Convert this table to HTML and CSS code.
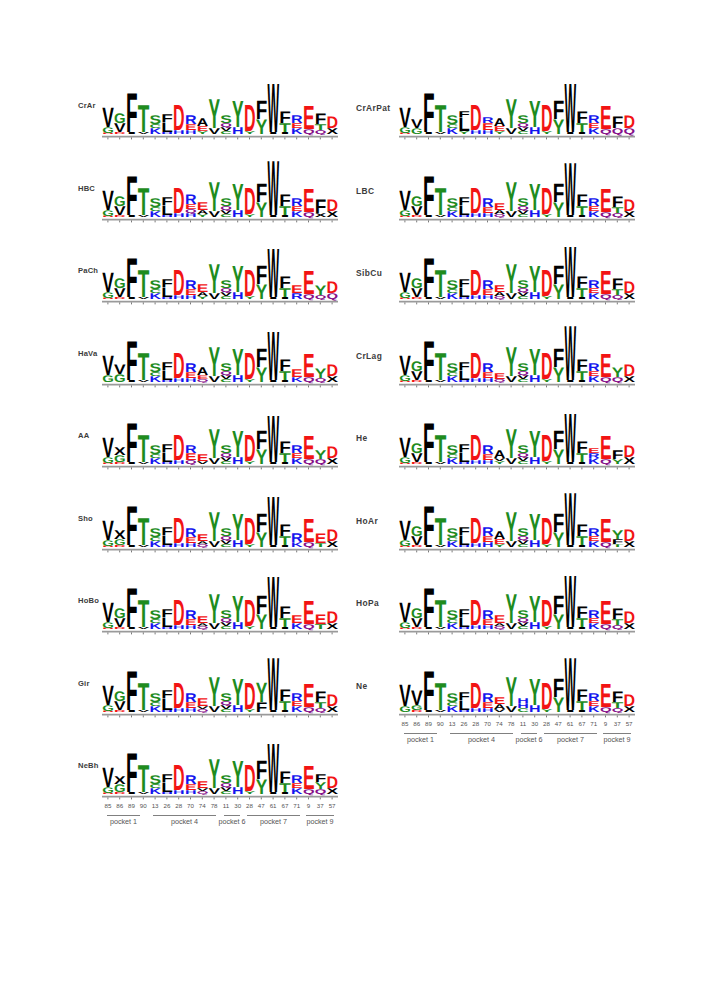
FILE: index.html
```html
<!DOCTYPE html>
<html lang="en">
<head>
<meta charset="utf-8">
<title>Sequence logos</title>
<link rel="stylesheet" href="styles.css">
</head>
<body>
<main class="figure">
  <div class="entry left"><span class="name">CrAr</span><svg class="logo" data-logo="CrAr"></svg></div>
  <div class="entry left"><span class="name">HBC</span><svg class="logo" data-logo="HBC"></svg></div>
  <div class="entry left"><span class="name">PaCh</span><svg class="logo" data-logo="PaCh"></svg></div>
  <div class="entry left"><span class="name">HaVa</span><svg class="logo" data-logo="HaVa"></svg></div>
  <div class="entry left"><span class="name">AA</span><svg class="logo" data-logo="AA"></svg></div>
  <div class="entry left"><span class="name">Sho</span><svg class="logo" data-logo="Sho"></svg></div>
  <div class="entry left"><span class="name">HoBo</span><svg class="logo" data-logo="HoBo"></svg></div>
  <div class="entry left"><span class="name">Gir</span><svg class="logo" data-logo="Gir"></svg></div>
  <div class="entry left"><span class="name">NeBh</span><svg class="logo pockets" data-logo="NeBh"></svg></div>
  <div class="entry right"><span class="name">CrArPat</span><svg class="logo" data-logo="CrArPat"></svg></div>
  <div class="entry right"><span class="name">LBC</span><svg class="logo" data-logo="LBC"></svg></div>
  <div class="entry right"><span class="name">SibCu</span><svg class="logo" data-logo="SibCu"></svg></div>
  <div class="entry right"><span class="name">CrLag</span><svg class="logo" data-logo="CrLag"></svg></div>
  <div class="entry right"><span class="name">He</span><svg class="logo" data-logo="He"></svg></div>
  <div class="entry right"><span class="name">HoAr</span><svg class="logo" data-logo="HoAr"></svg></div>
  <div class="entry right"><span class="name">HoPa</span><svg class="logo" data-logo="HoPa"></svg></div>
  <div class="entry right"><span class="name">Ne</span><svg class="logo pockets" data-logo="Ne"></svg></div>
</main>
<script src="script.js"></script>
</body>
</html>
```
FILE: styles.css
```css
html, body {
  margin: 0;
  padding: 0;
  background: #ffffff;
}
body {
  width: 709px;
  height: 994px;
  overflow: hidden;
  font-family: "Liberation Sans", Arial, sans-serif;
}
.figure {
  display: grid;
  grid-template-columns: 278px 290px;
  grid-template-rows: repeat(9, 82.5px);
  grid-auto-flow: column;
  padding: 69px 0 0 78px;
}
.entry {
  display: flex;
  align-items: flex-start;
}
.name {
  flex: none;
  font-weight: 700;
  color: #3c3c3c;
  line-height: 9px;
  white-space: nowrap;
}
.left .name {
  width: 24px;
  font-size: 7.6px;
  margin-top: 32px;
  letter-spacing: 0.2px;
}
.right .name {
  width: 43px;
  font-size: 8.4px;
  margin-top: 35px;
  letter-spacing: 0.4px;
}
.logo {
  flex: none;
  width: 240px;
  height: 82px;
  overflow: visible;
}
.logo.pockets {
  height: 100px;
}
.logo .aa {
  font-family: "Liberation Sans", Arial, sans-serif;
  font-weight: 700;
  text-rendering: geometricPrecision;
}
.logo .k { fill: #000000; }
.logo .g { fill: #1e8c1e; }
.logo .r { fill: #f21414; }
.logo .b { fill: #1414ee; }
.logo .p { fill: #86108a; }
.logo .axis { stroke: #9a9a9a; stroke-width: 1.6; }
.logo .tick { stroke: #7a7a7a; stroke-width: 1; }
.logo .num {
  font-family: "Liberation Sans", Arial, sans-serif;
  font-size: 6.2px;
  fill: #555555;
}
.logo .pk-line { stroke: #808080; stroke-width: 1; }
.logo .pk {
  font-family: "Liberation Sans", Arial, sans-serif;
  font-size: 7.2px;
  fill: #555555;
}
```
FILE: script.js
```js
(function () {
  var NS = 'http://www.w3.org/2000/svg';
  var COLW = 11.8;
  var BASE_Y = 65;
  var CAP = 71.6;

  var base = [
    'D1.5 G6 V20', 'D2 V9 G10', 'I2 F40', 'V2 T28',
    'K6 C4 S9', 'H2 L10 F8', 'H4 D26', 'H4 E6 R9', 'Y3 E5 A8', 'V6 Y30',
    'C3 V4 Q4 S8', 'H7 Y27',
    'Y3 D27', 'Y15 F19', 'I2 W50', 'I2 T9 F12', 'K6 E5 R8',
    'Q5 E24', 'Q4 T6 F11', 'X6 D12'
  ];

  var overrides = {
    CrAr: {},
    HBC: {7: 'H4 Q4 E5 R10', 8: 'Y3 A4 E8', 18: 'X4 F14', 14: 'I2 W56'},
    PaCh: {8: 'Y3 A4 E8', 16: 'R6 E8', 18: 'Q4 Y10', 19: 'Q6 D12'},
    HaVa: {0: 'G7 V20', 1: 'G8 V10', 8: 'Q3 E4 A8', 16: 'K5 E8', 18: 'Q4 Y10'},
    AA: {1: 'D2 G7 X8', 7: 'Q4 E7 R8', 8: 'V3 E7', 18: 'Q5 Y9', 14: 'I2 W48'},
    Sho: {1: 'D2 G6 X9', 8: 'Q3 A3 E7', 18: 'T4 E10', 16: 'K5 R9'},
    HoBo: {8: 'Q3 A3 E7', 16: 'K6 E8', 18: 'T5 E10', 14: 'I2 W52'},
    Gir: {13: 'F10 Y20', 14: 'I2 W54', 8: 'Q3 V3 E8', 5: 'H2 L12 F8'},
    NeBh: {1: 'D2 G8 X8', 8: 'Q3 V3 E7', 18: 'Q5 Y7 F8'},
    CrArPat: {1: 'G6 V9', 5: 'Y3 L14 F6', 7: 'H4 E7 R6', 18: 'Q6 F12', 19: 'Q6 D13'},
    LBC: {8: 'Q3 A4 E7', 14: 'I2 W54'},
    SibCu: {8: 'Q3 A4 E7', 14: 'I2 W52'},
    CrLag: {8: 'Q3 E6', 18: 'Q5 Y10', 14: 'I2 W56'},
    He: {8: 'Y3 V3 A8', 16: 'K6 R5 E5', 18: 'Y5 F9', 19: 'X7 D12'},
    HoAr: {7: 'H5 E6 R9', 18: 'T3 F5 Y9', 14: 'I2 W54'},
    HoPa: {8: 'Q3 A3 E8', 14: 'I2 W53'},
    Ne: {0: 'G6 V22', 1: 'D2 G5 V15', 8: 'V3 A5 E7', 10: 'C4 H5 H5', 14: 'I2 W54'}
  };

  var numbers = ['85','86','89','90','13','26','28','70','74','78','11','30','28','47','61','67','71','9','37','57'];
  var pockets = [
    {label: 'pocket 1', x1: 5, x2: 38},
    {label: 'pocket 4', x1: 51, x2: 114},
    {label: 'pocket 6', x1: 122, x2: 138},
    {label: 'pocket 7', x1: 145, x2: 198},
    {label: 'pocket 9', x1: 204, x2: 232}
  ];

  function colorClass(ch) {
    if ('GSTYC'.indexOf(ch) >= 0) return 'g';
    if ('NQ'.indexOf(ch) >= 0) return 'p';
    if ('KRH'.indexOf(ch) >= 0) return 'b';
    if ('DE'.indexOf(ch) >= 0) return 'r';
    return 'k';
  }

  function el(name, attrs, text) {
    var e = document.createElementNS(NS, name);
    for (var k in attrs) e.setAttribute(k, attrs[k]);
    if (text != null) e.textContent = text;
    return e;
  }

  function parse(s) {
    var out = [];
    var re = /([A-Z])([\d.]+)/g, m;
    while ((m = re.exec(s))) out.push([m[1], parseFloat(m[2])]);
    return out;
  }

  function draw(svg, name) {
    var ov = overrides[name] || {};
    var width = COLW * 20;
    svg.setAttribute('viewBox', '0 0 240 ' + (svg.classList.contains('pockets') ? 100 : 82));
    for (var i = 0; i < 20; i++) {
      var stack = parse(ov[i] != null ? ov[i] : base[i]);
      var x = i * COLW + 0.3;
      var yb = BASE_Y;
      stack.forEach(function (item) {
        var ch = item[0], h = item[1];
        var t = el('text', {
          'class': 'aa ' + colorClass(ch),
          x: 0, y: 0,
          'font-size': 100,
          textLength: 100,
          lengthAdjust: 'spacingAndGlyphs',
          transform: 'translate(' + x.toFixed(2) + ',' + yb.toFixed(2) + ') scale(' + ((COLW - 0.2) / 100).toFixed(4) + ',' + (h / CAP).toFixed(4) + ')'
        }, ch);
        svg.appendChild(t);
        yb -= h;
      });
    }
    svg.appendChild(el('line', {'class': 'axis', x1: 0, y1: 67.6, x2: width, y2: 67.6}));
    for (var j = 0; j < 20; j++) {
      var cx = j * COLW + COLW / 2;
      svg.appendChild(el('line', {'class': 'tick', x1: cx, y1: 68.4, x2: cx, y2: 70.4}));
    }
    if (svg.classList.contains('pockets')) {
      numbers.forEach(function (n, k) {
        svg.appendChild(el('text', {'class': 'num', x: k * COLW + COLW / 2, y: 78.5, 'text-anchor': 'middle'}, n));
      });
      pockets.forEach(function (p) {
        svg.appendChild(el('line', {'class': 'pk-line', x1: p.x1, y1: 86.5, x2: p.x2, y2: 86.5}));
        svg.appendChild(el('text', {'class': 'pk', x: (p.x1 + p.x2) / 2, y: 95, 'text-anchor': 'middle'}, p.label));
      });
    }
  }

  var svgs = document.querySelectorAll('svg.logo');
  for (var s = 0; s < svgs.length; s++) draw(svgs[s], svgs[s].getAttribute('data-logo'));
})();
```
